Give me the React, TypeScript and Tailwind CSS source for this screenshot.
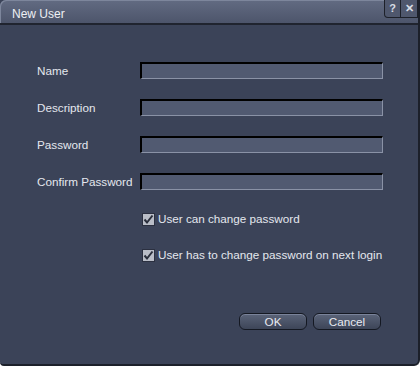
const fields = ["Name", "Description", "Password", "Confirm Password"];

const Field = ({ label }: { label: string }) => (
  <div className="flex h-[37px] items-center">
    <span className="w-[103px] pl-[37px] box-content text-[11.7px] text-[#e4e7ee]">{label}</span>
    <div className="h-[17px] w-[243px] border-t-2 border-l-2 border-b border-r border-t-black border-l-black border-b-[#8a92a6] border-r-[#8a92a6] bg-[#515a71]" />
  </div>
);

const Check = ({ label }: { label: string }) => (
  <div className="flex h-[36px] items-center pl-[142px]">
    <span className="flex h-[13px] w-[13px] items-center justify-center border border-[#2b3040] bg-[#b9bdc7]">
      <svg width="11" height="11" viewBox="0 0 11 11">
        <path d="M1.5 5.5 L4 8.5 L9.5 1.5" stroke="#2a2f3c" strokeWidth="2" fill="none" />
      </svg>
    </span>
    <span className="ml-[3px] text-[11.7px] text-[#e4e7ee]">{label}</span>
  </div>
);

const Btn = ({ label }: { label: string }) => (
  <button className="h-[17px] w-[68px] rounded-[6px] border border-[#141822] bg-gradient-to-b from-[#5b6479] to-[#3d4558] text-[11.7px] leading-[15px] text-[#e8ebf1] shadow-[inset_0_1px_0_#7a839a]">
    {label}
  </button>
);

export default function App() {
  return (
    <div className="flex h-[366px] w-[420px] flex-col overflow-hidden rounded-bl-[4px] rounded-br-[6px] border-r-2 border-b-2 border-[#1c202a] bg-[#3b4358] font-['Liberation_Sans',Arial,sans-serif]">
      <div className="flex h-[25px] shrink-0 items-start justify-between rounded-tl-[6px] border-b-2 border-[#20242f] bg-gradient-to-b from-[#626b82] to-[#4d556b] shadow-[inset_1px_1px_0_#7d869c]">
        <span className="pl-[12px] pt-[5px] text-[12px] text-[#eef0f4]">New User</span>
        <div className="flex">
          <span className="flex h-[18px] w-[17px] items-center justify-center rounded-bl-[4px] border border-t-0 border-[#1d2029] bg-[#4f576d] text-[11px] font-bold text-[#d8dce4]">?</span>
          <span className="flex h-[18px] w-[17px] items-center justify-center border border-t-0 border-l-0 border-[#1d2029] bg-[#4f576d] text-[11px] font-bold text-[#d8dce4]">✕</span>
        </div>
      </div>
      <div className="flex flex-col pt-[27px]">
        {fields.map((f) => (
          <Field key={f} label={f} />
        ))}
      </div>
      <div className="flex flex-col pt-[1px]">
        <Check label="User can change password" />
        <Check label="User has to change password on next login" />
      </div>
      <div className="flex justify-end gap-[6px] pr-[37px] pt-[40px]">
        <Btn label="OK" />
        <Btn label="Cancel" />
      </div>
    </div>
  );
}
